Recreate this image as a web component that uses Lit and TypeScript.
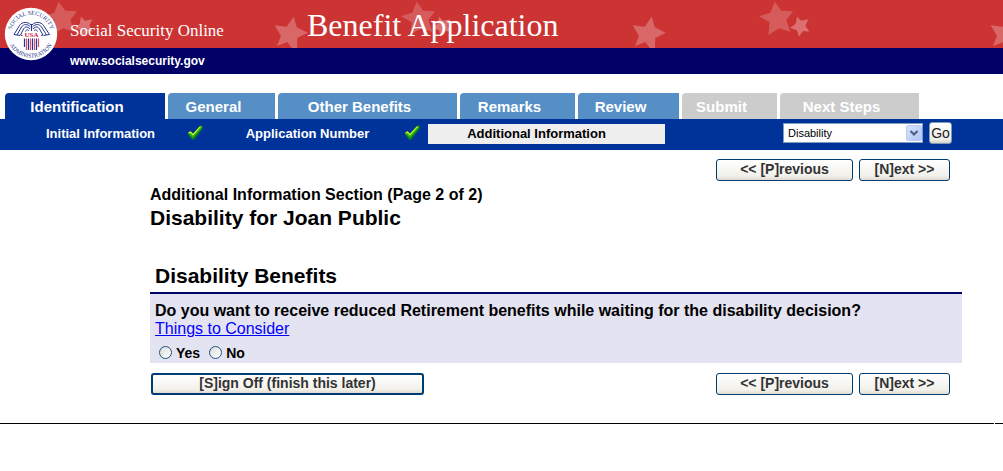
import { LitElement, html, css, svg } from "lit";
import { customElement } from "lit/decorators.js";
import { classMap } from "lit/directives/class-map.js";
import { styleMap } from "lit/directives/style-map.js";

interface Tab {
  label: string;
  width: number;
  state: "current" | "open" | "locked";
}

interface Step {
  label: string;
  width: number;
  done: boolean;
}

const TABS: Tab[] = [
  { label: "Identification", width: 160, state: "current" },
  { label: "General", width: 107, state: "open" },
  { label: "Other Benefits", width: 179, state: "open" },
  { label: "Remarks", width: 115, state: "open" },
  { label: "Review", width: 101, state: "open" },
  { label: "Submit", width: 95, state: "locked" },
  { label: "Next Steps", width: 139, state: "locked" },
];

const STEPS: Step[] = [
  { label: "Initial Information", width: 189, done: true },
  { label: "Application Number", width: 209, done: true },
  { label: "Additional Information", width: 237, done: false },
];

@customElement("ssa-seal")
export class SsaSeal extends LitElement {
  static styles = css`
    :host {
      display: block;
      width: 54px;
      height: 54px;
    }
    .seal {
      display: block;
      width: 100%;
      height: 100%;
    }
    .ring {
      font: 400 6px "Liberation Serif", serif;
      fill: #26368c;
    }
    .usa {
      font: 700 7px "Liberation Serif", serif;
      fill: #d4203c;
    }
  `;

  render() {
    const stripes = [20, 22, 24, 26, 28, 30, 32, 34];
    return html`
      <svg class="seal" viewBox="0 0 54 54" role="img" aria-label="Social Security Administration seal">
        <defs>
          <path id="top" d="M7.700 33A20 20 0 1 1 46.300 33" />
          <path id="bottom" d="M3.300 27A23.700 23.700 0 0 0 50.700 27" />
        </defs>
        <circle cx="27" cy="27" r="26.200" fill="#fff" />
        <text class="ring" text-anchor="middle"><textPath href="#top" startOffset="50%">SOCIAL SECURITY</textPath></text>
        <text class="ring" text-anchor="middle"><textPath href="#bottom" startOffset="50%">ADMINISTRATION</textPath></text>
        <g fill="none" stroke="#26368c" stroke-width="1">
          <path d="M27 18C24 14.500 18 14.500 15.500 18.500L10 27.500L13 28" />
          <path d="M26.500 20C23.500 16.500 19.500 17 17.500 20L13 28L16 28.500" />
          <path d="M26 22C23 19 21 19.500 19.500 22L16.500 28L18.500 28.500" />
          <path d="M25 24C23.500 22 22.500 22.500 21.500 24.500" />
          <path d="M28 18C31 14.500 37 14.500 39.500 18.500L45.500 27.500L42.500 28" />
          <path d="M28.500 20C31.500 16.500 35.500 17 37.500 20L42.500 28L39.500 28.500" />
          <path d="M29 22C32 19 34 19.500 35.500 22L39 28L37 28.500" />
          <path d="M30 24C31.500 22 32.500 22.500 33.500 24.500" />
          <path d="M27.500 17V24" />
        </g>
        <rect x="19" y="25" width="17" height="5.500" fill="#fff" />
        <text class="usa" x="27.500" y="30.300" text-anchor="middle">USA</text>
        ${stripes.map(
          (x, i) => svg`<path d="M${x + 0.5} 31.500V${i === 0 || i === 7 ? 40 : 43}" stroke=${i % 2 ? "#d4506c" : "#26368c"} stroke-width="1.200" />`
        )}
      </svg>
    `;
  }
}

@customElement("ssa-banner")
export class SsaBanner extends LitElement {
  static styles = css`
    :host {
      display: block;
      position: relative;
      color: #fff;
    }
    .red {
      position: relative;
      display: grid;
      grid-template-columns: 237px 1fr;
      align-items: baseline;
      height: 48px;
      box-sizing: border-box;
      padding: 1px 0 0 70px;
      overflow: hidden;
      background: #cc3333;
      font-family: "Liberation Serif", serif;
      line-height: 48px;
      white-space: nowrap;
    }
    .stars {
      position: absolute;
      inset: 0;
      width: 100%;
      height: 48px;
    }
    .site,
    .title {
      position: relative;
      margin: 0;
      font-weight: 400;
    }
    .site {
      font-size: 17px;
    }
    .title {
      font-size: 32px;
    }
    .blue {
      height: 26px;
      padding-left: 70px;
      background: #000066;
      font: 700 12px/26px "Liberation Sans", Arial, sans-serif;
    }
    .blue a {
      color: inherit;
      text-decoration: none;
    }
    .seal {
      position: absolute;
      left: 4px;
      top: 7px;
    }
  `;

  render() {
    return html`
      <div class="red">
        <svg class="stars" aria-hidden="true">
          <defs>
            <pattern id="sky" width="358" height="48" patternUnits="userSpaceOnUse">
              <path fill="#d65b5b" d="M58.700 1.700L65.300 10.700L77 11.300L70.300 20L74.300 31.700L63 28.300L52.300 35L53.700 22.300L43 16.300L54.300 12.700Z" />
              <path fill="#dc7070" d="M81 16.700L85 20.700L92.300 19.300L89.300 25.700L93.300 31.700L87 31L83 36.700L81 30.300L74 27.700L79.700 24Z" />
              <path fill="#da6767" d="M293.700 16.700L296.700 27.300L307.700 32.700L297.300 38L297 48H292L287.300 42L277 46L281 36L274.700 25.300L286.700 26.700Z" />
            </pattern>
          </defs>
          <rect width="100%" height="48" fill="url(#sky)" />
        </svg>
        <div class="site">Social Security Online</div>
        <h1 class="title">Benefit Application</h1>
      </div>
      <div class="blue"><a href="#home">www.socialsecurity.gov</a></div>
      <ssa-seal class="seal"></ssa-seal>
    `;
  }
}

@customElement("ssa-navigation")
export class SsaNavigation extends LitElement {
  static styles = css`
    :host {
      display: block;
      font-family: "Liberation Sans", Arial, sans-serif;
    }
    ul {
      list-style: none;
      margin: 0;
      padding: 0;
    }
    a {
      color: inherit;
      text-decoration: none;
    }
    .tabs {
      display: flex;
      gap: 3px;
      padding: 19px 5px 0;
    }
    .tab {
      flex: 0 1 auto;
      box-sizing: border-box;
      height: 26px;
      padding-right: 16px;
      border-top-left-radius: 4px;
      background: #558fc5;
      color: #fff;
      font-size: 15px;
      font-weight: 700;
      line-height: 27px;
      text-align: center;
      white-space: nowrap;
    }
    .current {
      background: #003399;
    }
    .locked {
      background: #cccccc;
    }
    .bar {
      display: flex;
      align-items: center;
      justify-content: space-between;
      box-sizing: border-box;
      height: 31px;
      padding: 0 51px 1px 14px;
      background: #003399;
    }
    .steps {
      display: flex;
      gap: 8px;
    }
    .step {
      display: flex;
      align-items: center;
      height: 20px;
      color: #fff;
      font-size: 13px;
      font-weight: 700;
      line-height: 22px;
      white-space: nowrap;
    }
    .step a {
      flex: 1;
      text-align: center;
    }
    .here {
      box-sizing: border-box;
      padding-right: 20px;
      background: #eeeeee;
      color: #000;
    }
    .check {
      width: 16px;
      height: 15px;
      margin-bottom: 3px;
    }
    .jump {
      display: flex;
      align-items: center;
      gap: 6px;
      margin: 0 0 2px;
    }
    .picker {
      position: relative;
      display: block;
      width: 140px;
      height: 20px;
    }
    select {
      appearance: none;
      display: block;
      box-sizing: border-box;
      width: 100%;
      height: 100%;
      margin: 0;
      padding: 0 20px 0 4px;
      border: 1px solid #7f9db9;
      border-radius: 0;
      background: #fff;
      color: #000;
      font: 11px "Liberation Sans", Arial, sans-serif;
    }
    .arrow {
      position: absolute;
      right: 1px;
      top: 2px;
      width: 16px;
      height: 16px;
      pointer-events: none;
    }
    .go {
      box-sizing: border-box;
      width: 23px;
      height: 22px;
      padding: 0;
      border: 1px solid #7f9db9;
      border-radius: 3px;
      background: linear-gradient(#ffffff, #ecebe6 85%, #d6d0c5);
      color: #222;
      font: 14px/18px "Liberation Sans", Arial, sans-serif;
    }
  `;

  private tick() {
    return html`<svg class="check" viewBox="0 0 16 15" role="img" aria-label="Completed">
      <path d="M.500 8.500L3.500 6L6 8.500L12.500 1L15.500 .500V3.500L7 14.500H5Z" fill="#0c8a10" />
      <path d="M1.500 8.500L3.500 7L6 9.500L13 1.500L15 1.500V2.500L6 12.500Z" fill="#2fbf1a" />
      <path d="M1.500 8L3.500 7L6 9.700L13.500 1.500" fill="none" stroke="#e8f030" stroke-width="1.100" />
    </svg>`;
  }

  render() {
    return html`
      <nav aria-label="Application sections">
        <ul class="tabs">
          ${TABS.map(
            (t) => html`<li
              class=${classMap({ tab: true, current: t.state === "current", locked: t.state === "locked" })}
              style=${styleMap({ width: `${t.width}px` })}
            >
              ${t.state === "locked" ? html`<span>${t.label}</span>` : html`<a href="#section">${t.label}</a>`}
            </li>`
          )}
        </ul>
      </nav>
      <div class="bar">
        <ul class="steps">
          ${STEPS.map(
            (s) => html`<li
              class=${classMap({ step: true, here: !s.done })}
              style=${styleMap({ width: `${s.width}px` })}
            >
              <a href="#step">${s.label}</a>${s.done ? this.tick() : ""}
            </li>`
          )}
        </ul>
        <form class="jump" @submit=${(e: Event) => e.preventDefault()}>
          <label class="picker">
            <select aria-label="Go to page">
              <option>Disability</option>
            </select>
            <svg class="arrow" viewBox="0 0 16 16" aria-hidden="true">
              <defs>
                <linearGradient id="face" x2="1" y2="1">
                  <stop stop-color="#dbe6fe" />
                  <stop offset="1" stop-color="#aec4f6" />
                </linearGradient>
              </defs>
              <rect x=".500" y=".500" width="15" height="15" rx="1.500" fill="url(#face)" stroke="#b9cbf5" />
              <path d="M4.500 6L8 9.500L11.500 6" fill="none" stroke="#4d6185" stroke-width="2.200" />
            </svg>
          </label>
          <button class="go" type="submit">Go</button>
        </form>
      </div>
    `;
  }
}

@customElement("app-root")
export class AppRoot extends LitElement {
  static styles = css`
    :host {
      display: block;
      background: #fff;
      color: #000;
      font-family: "Liberation Sans", Arial, sans-serif;
    }
    .content {
      padding: 9px 41px 28px 150px;
    }
    .actions {
      display: flex;
      gap: 6px;
      padding: 0 12px 0 1px;
      justify-content: flex-end;
    }
    .actions button {
      box-sizing: border-box;
      height: 22px;
      padding: 0 0 2px;
      border: 1px solid #003c74;
      border-radius: 3px;
      background: linear-gradient(#ffffff, #f1f0ea 80%, #dedbd0);
      color: #333;
      font: 700 14px/18px "Liberation Sans", Arial, sans-serif;
      white-space: nowrap;
    }
    .actions .previous {
      width: 137px;
    }
    .actions .next {
      width: 91px;
    }
    .actions .signoff {
      width: 273px;
      margin-right: auto;
      border-width: 2px;
      line-height: 16px;
    }
    .section,
    .topic,
    .heading {
      margin: 0;
      font-weight: 700;
    }
    .section {
      margin-top: 4px;
      font-size: 16px;
      line-height: 20px;
    }
    .topic {
      font-size: 21px;
      line-height: 26px;
    }
    .heading {
      margin-top: 33px;
      padding: 0 5px 4px;
      border-bottom: 2px solid #000066;
      font-size: 21px;
      line-height: 24px;
    }
    .question {
      min-width: 0;
      margin: 0 0 10px;
      padding: 8px 5px 2px;
      border: 0;
      background: #e4e3f1;
      font-size: 16px;
      line-height: 18px;
    }
    .prompt {
      font-weight: 700;
    }
    .help {
      display: block;
      width: fit-content;
      color: #0000ff;
    }
    .answers {
      display: flex;
      align-items: center;
      gap: 9px;
      height: 16px;
      margin-top: 7px;
      padding-left: 4px;
      font-size: 14px;
      font-weight: 700;
    }
    .answers label {
      display: flex;
      align-items: center;
      gap: 4px;
    }
    .answers input {
      appearance: none;
      box-sizing: border-box;
      width: 13px;
      height: 13px;
      margin: 0 0 2px;
      border: 1px solid #1d5281;
      border-radius: 50%;
      background: linear-gradient(135deg, #dcdcd7, #ffffff);
    }
    .answers input:checked {
      background: radial-gradient(circle, #21a121 3px, #ffffff 4px);
    }
    footer {
      display: flex;
      gap: 1px;
    }
    .rule {
      flex: 1;
      height: 1px;
      background: #000;
    }
    .stub {
      width: 8px;
      height: 1px;
      background: #000;
    }
  `;

  private pager() {
    return html`
      <button class="previous" type="button">&lt;&lt; [P]revious</button>
      <button class="next" type="button">[N]ext &gt;&gt;</button>
    `;
  }

  render() {
    return html`
      <ssa-banner></ssa-banner>
      <ssa-navigation></ssa-navigation>
      <main class="content">
        <div class="actions">${this.pager()}</div>
        <h2 class="section">Additional Information Section (Page 2 of 2)</h2>
        <h2 class="topic">Disability for Joan Public</h2>
        <h3 class="heading">Disability Benefits</h3>
        <div class="question" role="radiogroup" aria-labelledby="prompt">
          <div class="prompt" id="prompt">
            Do you want to receive reduced Retirement benefits while waiting for the disability decision?
          </div>
          <a class="help" href="#consider">Things to Consider</a>
          <div class="answers">
            <label><input type="radio" name="reduced" value="yes" />Yes</label>
            <label><input type="radio" name="reduced" value="no" />No</label>
          </div>
        </div>
        <div class="actions">
          <button class="signoff" type="button">[S]ign Off (finish this later)</button>
          ${this.pager()}
        </div>
      </main>
      <footer><div class="rule"></div><div class="stub"></div></footer>
    `;
  }
}
